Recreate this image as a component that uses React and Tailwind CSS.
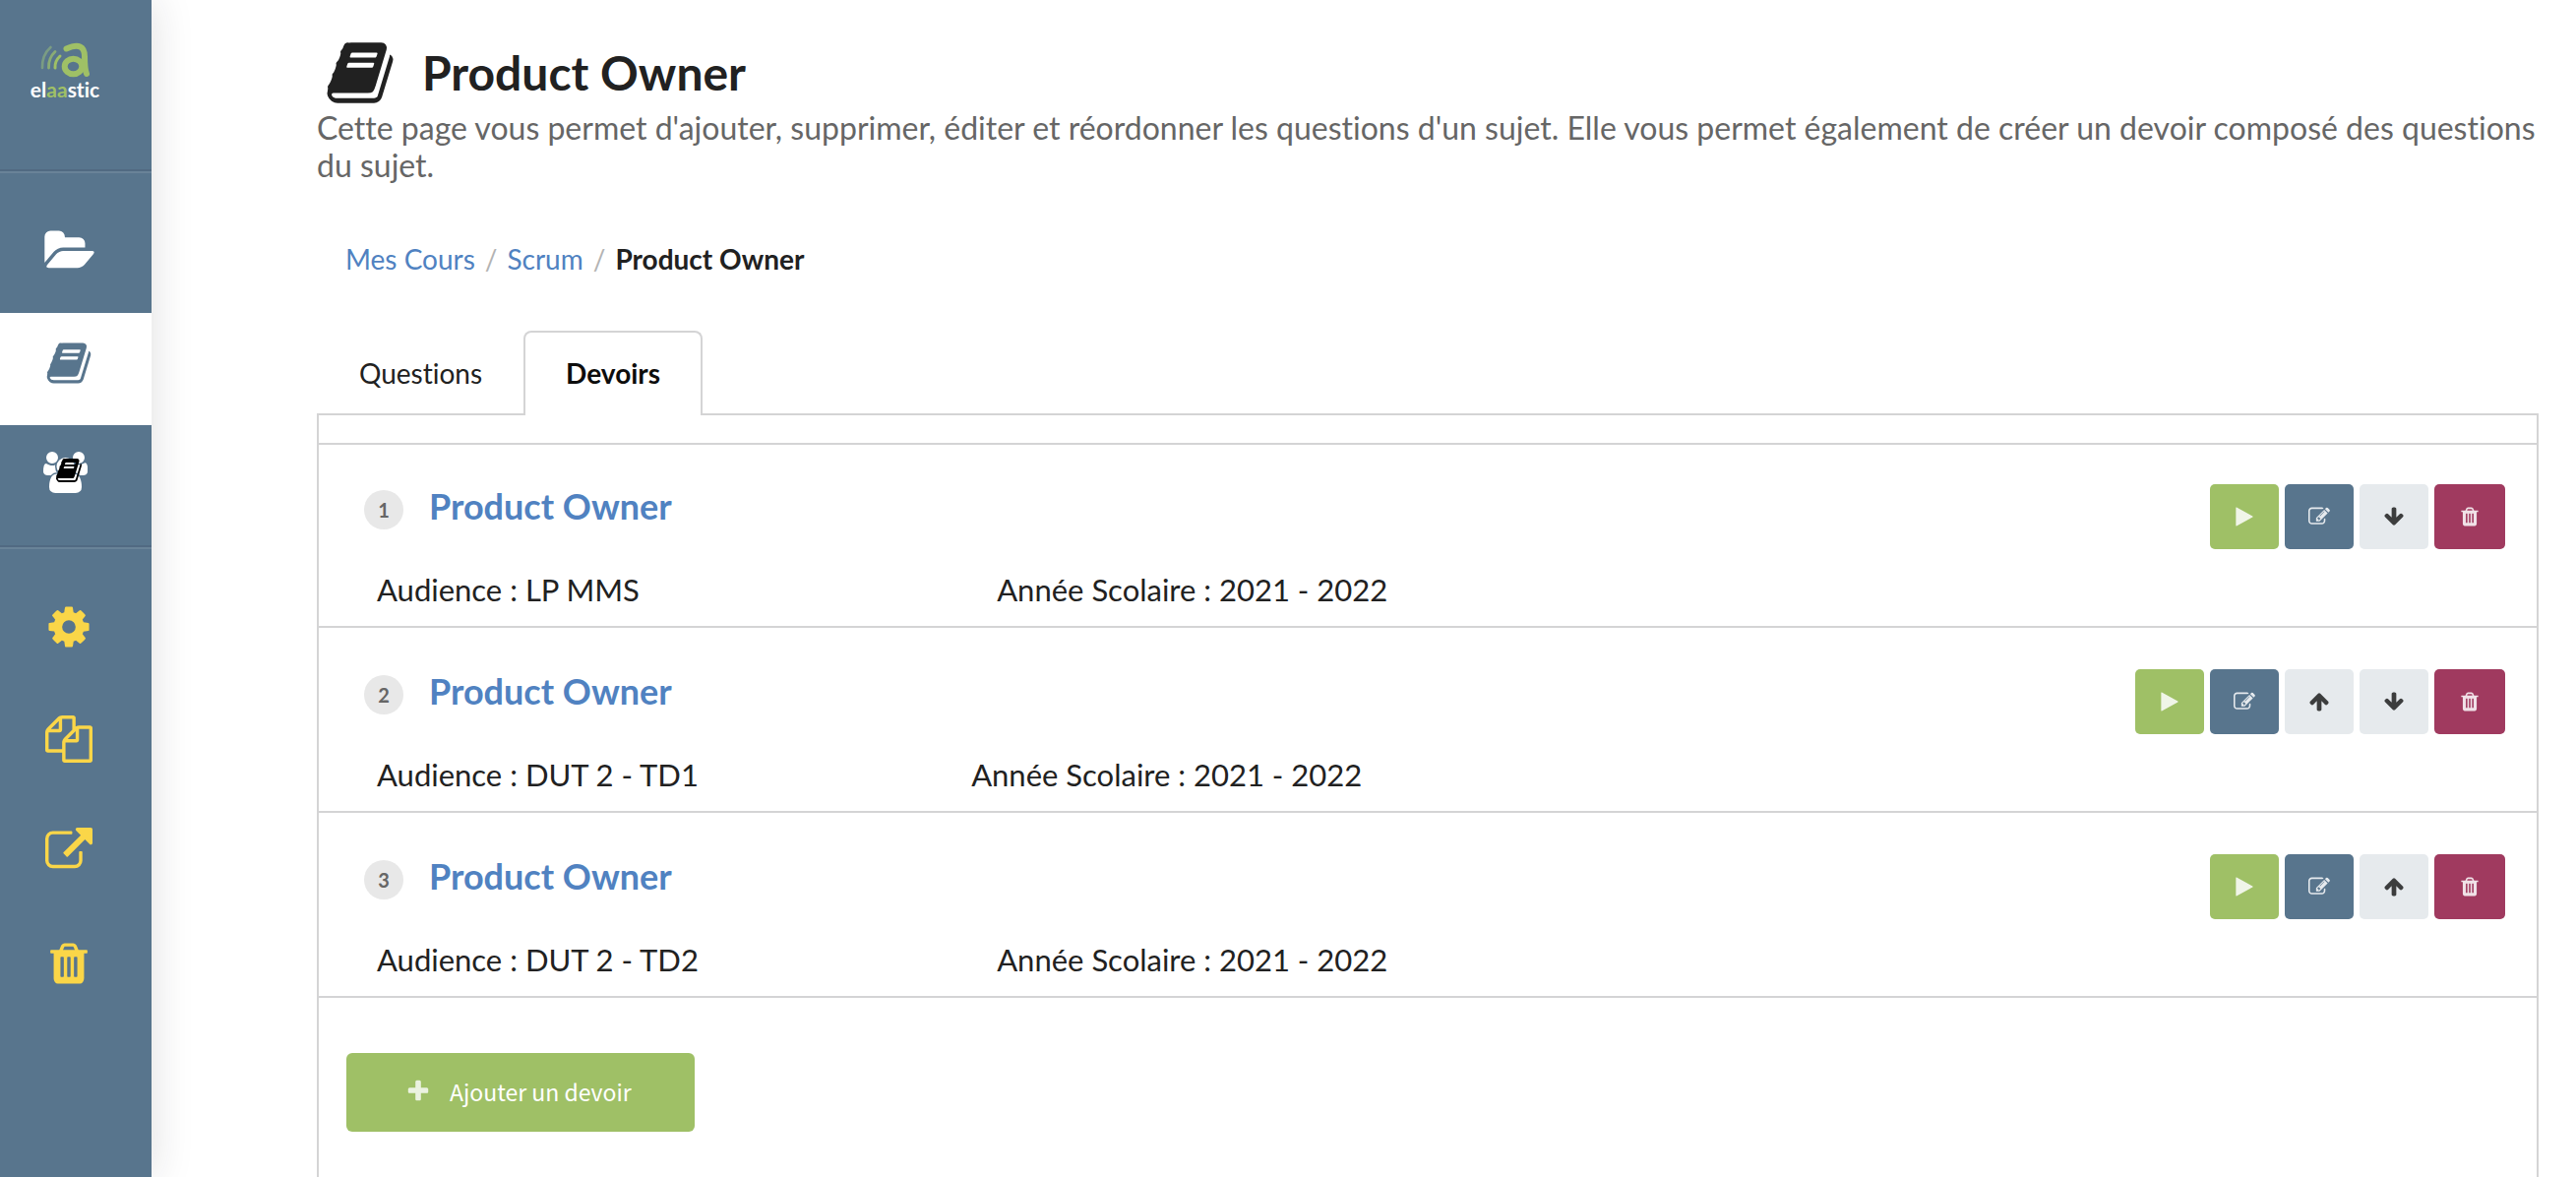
import React from "react";

const ICONS = {
  book: {
    box: "0 0 1792 1792",
    d: "M1703 478q40 57 18 129l-275 906q-19 64-76.5 107.5t-122.5 43.5h-923q-77 0-148.5-53.5t-99.5-131.5q-24-67-2-127 0-4 3-27t4-37q1-8-3-21.5t-3-19.5q2-11 8-21t16.5-23.5 16.5-23.5q23-38 45-91.5t30-91.5q3-10 .5-30t-.5-28q3-11 17-28t17-23q21-36 42-92t25-90q1-9-2.5-32t.5-28q4-13 22-30.5t22-22.5q19-26 42.5-84.5t27.5-96.5q1-8-3-25.5t-2-26.5q2-8 9-18t18-23 17-21q8-12 16.5-30.5t15-35 16-36 19.5-32 26.5-23.5 36-11.5 47.5 5.5l-1 3q38-9 51-9h761q74 0 114 56t18 130l-274 906q-36 119-71.5 153.5t-128.5 34.5h-869q-27 0-38 15-11 16-1 43 24 70 144 70h923q29 0 56-15.5t35-41.5l300-987q7-22 5-57 38 15 59 43zm-1064 2q-4 13 2 22.5t20 9.5h608q13 0 25.5-9.5t16.5-22.5l21-64q4-13-2-22.5t-20-9.5h-608q-13 0-25.5 9.5t-16.5 22.5zm-83 256q-4 13 2 22.5t20 9.5h608q13 0 25.5-9.5t16.5-22.5l21-64q4-13-2-22.5t-20-9.5h-608q-13 0-25.5 9.5t-16.5 22.5z",
  },
  folder: {
    box: "64 0 1880 1792",
    d: "M1943 952q0 31-31 66l-336 396q-43 51-120.5 86.5t-143.5 35.5h-1088q-34 0-60.5-13t-26.5-43q0-31 31-66l336-396q43-51 120.5-86.5t143.5-35.5h1088q34 0 60.5 13t26.5 43zm-343-344v160h-832q-94 0-197 47.5t-164 119.5l-337 396-5 6q0-4-.5-12.5t-.5-12.5v-960q0-92 66-158t158-66h320q92 0 158 66t66 158v32h544q92 0 158 66t66 158z",
  },
  users: {
    box: "64 0 1920 1792",
    d: "M657 896q-162 5-265 128h-134q-82 0-138-40.5t-56-118.5q0-353 124-353 6 0 43.5 21t97.5 42.5 119 21.5q67 0 133-23-5 37-5 66 0 159 93 287zm1071 637q0 120-73 189.5t-194 69.5h-874q-121 0-194-69.5t-73-189.5q0-53 3.5-103.5t14-109 26.5-108.5 43-97.5 62-81 85.5-53.5 111.5-20q10 0 43 21.5t73 48 107 48 135 21.5 135-21.5 107-48 73-48 43-21.5q61 0 111.5 20t85.5 53.5 62 81 43 97.5 26.5 108.5 14 109 3.5 103.5zm-1024-1277q0 106-75 181t-181 75-181-75-75-181 75-181 181-75 181 75 75 181zm704 384q0 159-112.5 271.5t-271.5 112.5-271.5-112.5-112.5-271.5 112.5-271.5 271.5-112.5 271.5 112.5 112.5 271.5zm576 225q0 78-56 118.5t-138 40.5h-134q-103-123-265-128 93-128 93-287 0-29-5-66 66 23 133 23 59 0 119-21.5t97.5-42.5 43.5-21q124 0 124 353zm-128-609q0 106-75 181t-181 75-181-75-75-181 75-181 181-75 181 75 75 181z",
  },
  cog: {
    box: "0 0 1792 1792",
    d: "M1152 896q0-106-75-181t-181-75-181 75-75 181 75 181 181 75 181-75 75-181zm512-109v222q0 12-8 23t-20 13l-185 28q-19 54-39 91 35 50 107 138 10 12 10 25t-9 23q-27 37-99 108t-94 71q-12 0-26-9l-138-108q-44 23-91 38-16 136-29 186-7 28-36 28h-222q-14 0-24.5-8.5t-11.5-21.5l-28-184q-49-16-90-37l-141 107q-10 9-25 9-14 0-25-11-126-114-165-168-7-10-7-23 0-12 8-23 15-21 51-66.5t54-70.5q-27-50-41-99l-183-27q-13-2-21-12.5t-8-23.5v-222q0-12 8-23t19-13l186-28q14-46 39-92-40-57-107-138-10-12-10-24 0-10 9-23 26-36 98.5-107.5t94.5-71.5q13 0 26 10l138 107q44-23 91-38 16-136 29-186 7-28 36-28h222q14 0 24.5 8.5t11.5 21.5l28 184q49 16 90 37l142-107q9-9 24-9 13 0 25 10 129 119 165 170 7 8 7 22 0 12-8 23-15 21-51 66.5t-54 70.5q26 50 41 98l183 28q13 2 21 12.5t8 23.5z",
  },
  copy: {
    box: "0 0 1792 1792",
    d: "M1696 384q40 0 68 28t28 68v1216q0 40-28 68t-68 28h-960q-40 0-68-28t-28-68v-288h-544q-40 0-68-28t-28-68v-672q0-40 20-88t48-76l408-408q28-28 76-48t88-20h416q40 0 68 28t28 68v328q68-40 128-40h416zm-544 213l-299 299h299v-299zm-640-384l-299 299h299v-299zm196 647l316-316v-416h-384v416q0 40-28 68t-68 28h-416v640h512v-256q0-40 20-88t48-76zm956 804v-1152h-384v416q0 40-28 68t-68 28h-416v640h896z",
  },
  external: {
    box: "0 0 1792 1792",
    d: "M1408 928v320q0 119-84.5 203.5t-203.5 84.5h-832q-119 0-203.5-84.5t-84.5-203.5v-832q0-119 84.5-203.5t203.5-84.5h704q14 0 23 9t9 23v64q0 14-9 23t-23 9h-704q-66 0-113 47t-47 113v832q0 66 47 113t113 47h832q66 0 113-47t47-113v-320q0-14 9-23t23-9h64q14 0 23 9t9 23zm384-864v512q0 26-19 45t-45 19-45-19l-176-176-652 652q-10 10-23 10t-23-10l-114-114q-10-10-10-23t10-23l652-652-176-176q-19-19-19-45t19-45 45-19h512q26 0 45 19t19 45z",
  },
  trash: {
    box: "0 0 1792 1792",
    d: "M704 1376v-704q0-14-9-23t-23-9h-64q-14 0-23 9t-9 23v704q0 14 9 23t23 9h64q14 0 23-9t9-23zm256 0v-704q0-14-9-23t-23-9h-64q-14 0-23 9t-9 23v704q0 14 9 23t23 9h64q14 0 23-9t9-23zm256 0v-704q0-14-9-23t-23-9h-64q-14 0-23 9t-9 23v704q0 14 9 23t23 9h64q14 0 23-9t9-23zm-544-992h448l-48-117q-7-9-17-11h-317q-10 2-17 11zm928 32v64q0 14-9 23t-23 9h-96v948q0 83-47 143.5t-113 60.5h-832q-66 0-113-58.5t-47-141.5v-952h-96q-14 0-23-9t-9-23v-64q0-14 9-23t23-9h309l70-167q15-37 54-63t79-26h320q40 0 79 26t54 63l70 167h309q14 0 23 9t9 23z",
  },
  edit: {
    box: "0 0 1792 1792",
    d: "M888 1184l116-116-152-152-116 116v56h96v96h56zm440-720q-16-16-33 1l-350 350q-17 17-1 33t33-1l350-350q17-17 1-33zm80 594v190q0 119-84.5 203.5t-203.5 84.5h-832q-119 0-203.5-84.5t-84.5-203.5v-832q0-119 84.5-203.5t203.5-84.5h832q63 0 117 25 15 7 18 23 3 17-9 29l-49 49q-14 14-32 8-23-6-45-6h-832q-66 0-113 47t-47 113v832q0 66 47 113t113 47h832q66 0 113-47t47-113v-126q0-13 9-22l64-64q15-15 35-7t20 29zm-96-738l288 288-672 672h-288v-288zm444 132l-92 92-288-288 92-92q28-28 68-28t68 28l152 152q28 28 28 68t-28 68z",
  },
  up: {
    box: "0 0 1792 1792",
    d: "M1675 971q0 51-37 90l-75 75q-38 38-91 38-54 0-90-38l-294-293v704q0 52-37.5 84.5t-90.5 32.5h-128q-53 0-90.5-32.5t-37.5-84.5v-704l-294 293q-36 38-90 38t-90-38l-75-75q-38-38-38-90 0-53 38-91l651-651q35-37 90-37 54 0 91 37l651 651q37 39 37 91z",
  },
  down: {
    box: "0 0 1792 1792",
    d: "M1675 832q0 53-37 90l-651 652q-39 37-91 37-53 0-90-37l-651-652q-38-36-38-90 0-53 38-91l74-75q39-37 91-37 53 0 90 37l294 294v-704q0-52 38-90t90-38h128q52 0 90 38t38 90v704l294-294q37-37 90-37 52 0 91 37l75 75q37 39 37 91z",
  },
  play: {
    box: "0 0 1792 1792",
    d: "M1576 927l-1328 738q-23 13-39.5 3t-16.5-36v-1472q0-26 16.5-36t39.5 3l1328 738q23 13 23 31t-23 31z",
  },
  plus: {
    box: "0 0 1792 1792",
    d: "M1600 736v192q0 40-28 68t-68 28h-416v416q0 40-28 68t-68 28h-192q-40 0-68-28t-28-68v-416h-416q-40 0-68-28t-28-68v-192q0-40 28-68t68-28h416v-416q0-40 28-68t68-28h192q40 0 68 28t28 68v416h416q40 0 68 28t28 68z",
  },
};

function Icon({ name, className }) {
  return (
    <svg viewBox={ICONS[name].box} fill="currentColor" aria-hidden="true" className={className}>
      <path d={ICONS[name].d} />
    </svg>
  );
}

function Logo() {
  return (
    <a href="#accueil" aria-label="elaastic" className="flex h-[172px] flex-col items-center pt-[42px] pr-[22px]">
      <svg viewBox="0 0 50 38" fill="none" strokeLinecap="round" className="h-[38px] w-[50px]" aria-hidden="true">
        <path d="M10.5 6Q1.5 14 2 27" stroke="#7a9c83" strokeWidth="2.6" />
        <path d="M15 10.500Q8 17 8.500 27" stroke="#8aac75" strokeWidth="2.800" />
        <path d="M20 15Q14.500 20 15 27" stroke="#9fc066" strokeWidth="3" />
        <path d="M26.500 7.500Q45 -0.500 45 15.500Q45 28 47 33" stroke="#9fc066" strokeWidth="6" />
        <ellipse cx="33.500" cy="25.500" rx="8.800" ry="7.800" stroke="#9fc066" strokeWidth="6" />
      </svg>
      <span className="text-[21px] leading-[22px] font-bold text-white">
        el<span className="text-[#9fc066]">aa</span>stic
      </span>
    </a>
  );
}

function NavItem({ label, active, children }) {
  return (
    <a
      href="#menu"
      aria-label={label}
      className={
        active
          ? "flex h-[114px] justify-center bg-white pt-[27px] pr-[14px] text-[#58758d]"
          : "flex h-[114px] justify-center pt-[27px] pr-[14px]"
      }
    >
      {children}
    </a>
  );
}

function Sidebar() {
  return (
    <nav className="relative z-10 w-[154px] shrink-0 bg-[#58758d] shadow-[0_0_40px_rgba(34,36,38,0.15)]">
      <Logo />
      <div className="border-t-2 border-[#516a82] text-white">
        <div className="border-t-2 border-[#698398] pt-7 pb-2">
          <NavItem label="Mes cours">
            <Icon name="folder" className="h-12 w-[51px]" />
          </NavItem>
          <NavItem label="Mes sujets" active>
            <Icon name="book" className="size-12" />
          </NavItem>
          <NavItem label="Mes devoirs">
            <span className="relative h-12 w-[52px]">
              <Icon name="users" className="h-[42px] w-[45px]" />
              <Icon name="book" className="absolute top-[5px] left-[12px] size-7 text-black" />
            </span>
          </NavItem>
        </div>
      </div>
      <div className="border-t-2 border-[#516a82] text-[#fad648]">
        <div className="border-t-2 border-[#698398] pt-7">
          <NavItem label="Paramètres">
            <Icon name="cog" className="size-12" />
          </NavItem>
          <NavItem label="Dupliquer">
            <Icon name="copy" className="size-12" />
          </NavItem>
          <NavItem label="Partager">
            <Icon name="external" className="size-12" />
          </NavItem>
          <NavItem label="Supprimer">
            <Icon name="trash" className="size-12" />
          </NavItem>
        </div>
      </div>
    </nav>
  );
}

const ACTIONS = {
  play: { label: "Lancer", style: "w-[70px] bg-[#9fc066] text-white" },
  edit: { label: "Modifier", style: "w-[70px] bg-[#58758d] text-white" },
  up: { label: "Monter", style: "w-[70px] bg-[#e6eaed] text-[#1f1f1f]" },
  down: { label: "Descendre", style: "w-[70px] bg-[#e6eaed] text-[#1f1f1f]" },
  trash: { label: "Supprimer", style: "w-[72px] bg-[#a03a5f] text-white" },
};

function ActionButton({ name }) {
  const action = ACTIONS[name];
  return (
    <button
      type="button"
      aria-label={action.label}
      className={`flex h-[66px] items-center justify-center rounded-[5px] ${action.style}`}
    >
      <Icon name={name} className="size-[22px] opacity-85" />
    </button>
  );
}

const ASSIGNMENTS = [
  { audience: "LP MMS", actions: ["play", "edit", "down", "trash"] },
  { audience: "DUT 2 - TD1", actions: ["play", "edit", "up", "down", "trash"] },
  { audience: "DUT 2 - TD2", actions: ["play", "edit", "up", "trash"] },
];

function Assignment({ index, audience, actions }) {
  return (
    <li className="grid h-[188px] grid-cols-[12fr_23fr_auto] grid-rows-[84px_auto] border-b-2 border-[#d4d4d5] pt-[42px] pr-8 pl-[46px]">
      <div className="col-span-2 flex items-start gap-[26px]">
        <span className="mt-[6px] flex size-10 items-center justify-center rounded-full bg-[#e8e8e8] text-[20px] leading-none font-bold text-[#666]">
          {index}
        </span>
        <h3 className="text-[36px] leading-[44px] font-bold">
          <a href="#devoir" className="text-[#5082c1]">
            Product Owner
          </a>
        </h3>
      </div>
      <div className="col-start-3 row-span-2 flex items-start gap-[6px]">
        {actions.map((name) => (
          <ActionButton key={name} name={name} />
        ))}
      </div>
      <p className="col-start-1 row-start-2 pl-[13px] text-[31px] leading-[47px]">Audience : {audience}</p>
      <p className="col-start-2 row-start-2 text-[31px] leading-[47px]">Année Scolaire : 2021 - 2022</p>
    </li>
  );
}

export default function App() {
  return (
    <div className="flex min-h-screen bg-white font-['Lato','Liberation_Sans',sans-serif] text-[#212121] [font-variant-ligatures:none]">
      <Sidebar />
      <main className="flex min-w-0 flex-1 flex-col pr-[38px] pl-[168px]">
        <header className="pt-[37px]">
          <h1 className="flex items-center gap-[27px] text-[48px] leading-[74px] font-bold">
            <Icon name="book" className="ml-[8px] size-[72px]" />
            Product Owner
          </h1>
          <p className="text-[32px] leading-[38px] text-[#666]">
            Cette page vous permet d'ajouter, supprimer, éditer et réordonner les questions d'un sujet. Elle vous permet
            également de créer un devoir composé des questions du sujet.
          </p>
        </header>

        <nav aria-label="Fil d'Ariane" className="mt-[56px] flex gap-[10px] pl-[29px] text-[28px] leading-[40px]">
          <a href="#cours" className="text-[#5082c1]">
            Mes Cours
          </a>
          <span className="text-[#b3b3b3]">/</span>
          <a href="#scrum" className="text-[#5082c1]">
            Scrum
          </a>
          <span className="text-[#b3b3b3]">/</span>
          <span className="font-bold">Product Owner</span>
        </nav>

        <div role="tablist" className="mt-[53px] flex border-b-2 border-[#d4d4d5] text-[28px]">
          <button type="button" role="tab" aria-selected="false" className="h-[84px] pt-[2px] pr-[42px] pl-[43px]">
            Questions
          </button>
          <button
            type="button"
            role="tab"
            aria-selected="true"
            className="-mb-[2px] h-[86px] rounded-t-lg border-2 border-b-0 border-[#d4d4d5] bg-white px-[41px] pb-[2px] font-bold text-[#0d0d0d]"
          >
            Devoirs
          </button>
        </div>

        <section role="tabpanel" className="flex-1 border-x-2 border-[#d4d4d5]">
          <div className="-mb-[2px] h-[30px] border-b-2 border-[#d4d4d5]" />
          <ul>
            {ASSIGNMENTS.map((item, i) => (
              <Assignment key={item.audience} index={i + 1} {...item} />
            ))}
          </ul>
          <button
            type="button"
            className="mt-14 ml-7 flex h-20 items-center gap-[19px] rounded-md bg-[#9fc066] pr-16 pb-[2px] pl-[60px] font-['Noto_Sans_CJK_SC',sans-serif] text-[23px] text-white"
          >
            <Icon name="plus" className="size-[26px] opacity-80" />
            Ajouter un devoir
          </button>
        </section>
      </main>
    </div>
  );
}
